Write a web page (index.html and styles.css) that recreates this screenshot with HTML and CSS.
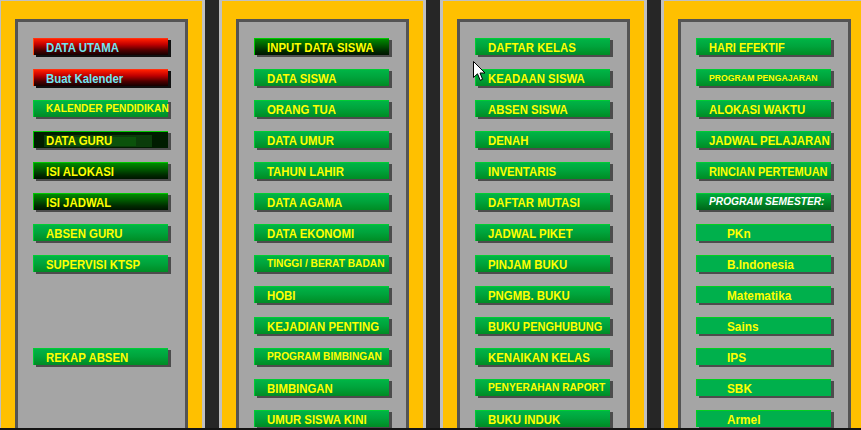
FILE: index.html
```html
<!DOCTYPE html>
<html>
<head>
<meta charset="utf-8">
<title>Menu</title>
<link rel="stylesheet" href="styles.css">
</head>
<body>
<div class="screen">
  <section class="col">
    <div class="panel">
      <div class="btn red"><span class="t">DATA UTAMA</span></div>
      <div class="btn red"><span class="t">Buat Kalender</span></div>
      <div class="btn s10"><span class="t">KALENDER PENDIDIKAN</span></div>
      <div class="btn dark guru"><span class="t">DATA GURU</span></div>
      <div class="btn dark"><span class="t">ISI ALOKASI</span></div>
      <div class="btn dark"><span class="t">ISI JADWAL</span></div>
      <div class="btn"><span class="t">ABSEN GURU</span></div>
      <div class="btn"><span class="t">SUPERVISI KTSP</span></div>
      <div class="spacer"></div>
      <div class="btn"><span class="t">REKAP ABSEN</span></div>
    </div>
  </section>
  <section class="col">
    <div class="panel">
      <div class="btn dark"><span class="t">INPUT DATA SISWA</span></div>
      <div class="btn"><span class="t">DATA SISWA</span></div>
      <div class="btn"><span class="t">ORANG TUA</span></div>
      <div class="btn"><span class="t">DATA UMUR</span></div>
      <div class="btn"><span class="t">TAHUN LAHIR</span></div>
      <div class="btn"><span class="t">DATA AGAMA</span></div>
      <div class="btn"><span class="t">DATA EKONOMI</span></div>
      <div class="btn s9"><span class="t">TINGGI / BERAT BADAN</span></div>
      <div class="btn"><span class="t">HOBI</span></div>
      <div class="btn"><span class="t">KEJADIAN PENTING</span></div>
      <div class="btn s10"><span class="t">PROGRAM BIMBINGAN</span></div>
      <div class="btn"><span class="t">BIMBINGAN</span></div>
      <div class="btn"><span class="t">UMUR SISWA KINI</span></div>
    </div>
  </section>
  <section class="col">
    <div class="panel">
      <div class="btn"><span class="t">DAFTAR KELAS</span></div>
      <div class="btn"><span class="t">KEADAAN SISWA</span></div>
      <div class="btn"><span class="t">ABSEN SISWA</span></div>
      <div class="btn"><span class="t">DENAH</span></div>
      <div class="btn"><span class="t">INVENTARIS</span></div>
      <div class="btn"><span class="t">DAFTAR MUTASI</span></div>
      <div class="btn"><span class="t">JADWAL PIKET</span></div>
      <div class="btn"><span class="t">PINJAM BUKU</span></div>
      <div class="btn"><span class="t">PNGMB. BUKU</span></div>
      <div class="btn s11"><span class="t">BUKU PENGHUBUNG</span></div>
      <div class="btn"><span class="t">KENAIKAN KELAS</span></div>
      <div class="btn s9"><span class="t">PENYERAHAN RAPORT</span></div>
      <div class="btn"><span class="t">BUKU INDUK</span></div>
    </div>
  </section>
  <section class="col">
    <div class="panel">
      <div class="btn s11"><span class="t">HARI EFEKTIF</span></div>
      <div class="btn s8"><span class="t">PROGRAM PENGAJARAN</span></div>
      <div class="btn"><span class="t">ALOKASI WAKTU</span></div>
      <div class="btn"><span class="t">JADWAL PELAJARAN</span></div>
      <div class="btn s11"><span class="t">RINCIAN PERTEMUAN</span></div>
      <div class="btn sem"><span class="t">PROGRAM SEMESTER:</span></div>
      <div class="btn flat"><span class="t">PKn</span></div>
      <div class="btn flat"><span class="t">B.Indonesia</span></div>
      <div class="btn flat"><span class="t">Matematika</span></div>
      <div class="btn flat"><span class="t">Sains</span></div>
      <div class="btn flat"><span class="t">IPS</span></div>
      <div class="btn flat"><span class="t">SBK</span></div>
      <div class="btn flat"><span class="t">Armel</span></div>
    </div>
  </section>
</div>
<svg class="cursor" width="13" height="21" viewBox="0 0 13 21">
  <path d="M0.5 0.5 L0.5 16.5 L4.5 12.8 L7.2 19.3 L9.6 18.3 L7 12 L12 12 Z" fill="#fff" stroke="#000" stroke-width="1" stroke-linejoin="miter"/>
</svg>
</body>
</html>
```
FILE: styles.css
```css
html, body {
  margin: 0;
  padding: 0;
}
body {
  background: #141414;
  height: 430px;
  overflow: hidden;
  font-family: "Liberation Sans", Arial, sans-serif;
}
.screen {
  display: flex;
  gap: 14px;
  margin: -2px 0 0 -2px;
  height: 430px;
  overflow: hidden;
  background: #262626;
}
.col {
  flex: 0 0 auto;
  box-sizing: border-box;
  width: 207px;
  border: 3px solid #c0c0c0;
  border-bottom: none;
  background: #ffc000;
  padding: 18px 14px 0;
  display: flex;
  flex-direction: column;
}
.panel {
  flex: 1;
  border: 3px solid #545454;
  border-bottom: none;
  background: #a5a5a5;
  padding: 16px 0 0 15px;
  display: flex;
  flex-direction: column;
  gap: 14px;
}
.btn {
  flex: 0 0 auto;
  box-sizing: border-box;
  width: 135px;
  height: 17px;
  padding-left: 12px;
  border-top: 1px solid #00cc33;
  border-left: 1px solid #00cc33;
  background: linear-gradient(#00b446, #00a43c 45%, #008c24);
  box-shadow: 3px 2px 0 #4c4c4c;
  color: #ffff00;
  font-weight: bold;
  font-size: 11.4px;
  line-height: 16px;
  white-space: nowrap;
}
.t {
  display: inline-block;
  transform: scaleY(1.14);
}
.s11 { font-size: 11px; }
.s10 { font-size: 10.2px; }
.s9 { font-size: 10.2px; }
.s8 { font-size: 8.7px; }
.red {
  border-top-color: #ff3010;
  border-left-color: #ff4a10;
  background: linear-gradient(#ff1e00, #c00000 35%, #500000 70%, #140000);
  box-shadow: 3px 2px 0 #101010;
  color: #6fe6f2;
}
.dark {
  border-top-color: #00c800;
  border-left-color: #00c800;
  background: linear-gradient(#008a00, #005800 40%, #002a00 75%, #001400);
}
.guru {
  background:
    linear-gradient(#0b520b, #0b520b) 22px 5px / 80px 9px no-repeat,
    linear-gradient(#0a3c0a, #0a3c0a) 10px 3px / 108px 12px no-repeat,
    #001c00;
}
.sem {
  background: linear-gradient(#00a83c, #008a28 50%, #00661a);
  color: #ffffff;
  font-style: italic;
  font-size: 10.2px;
}
.flat {
  background: #00b04c;
  border-top-color: #00d020;
  border-left-color: #00d020;
  padding-left: 30px;
  font-size: 11.8px;
}
.spacer {
  flex: 0 0 auto;
  height: 48px;
}
.cursor {
  position: absolute;
  left: 473px;
  top: 61px;
}
```
